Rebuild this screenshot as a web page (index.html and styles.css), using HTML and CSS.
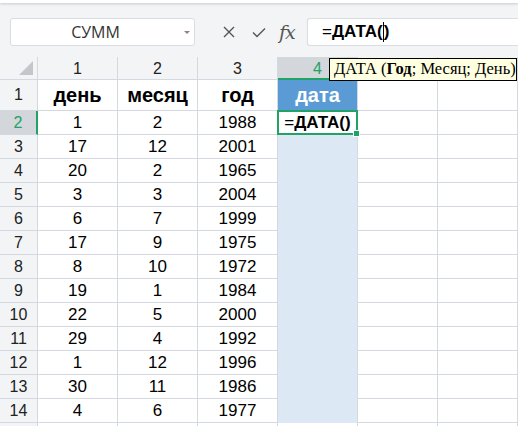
FILE: index.html
```html
<!DOCTYPE html>
<html>
<head>
<meta charset="utf-8">
<link rel="stylesheet" href="styles.css">
</head>
<body>
<div class="topstrip"></div>
<div class="toolbar">
  <div class="namebox"><span class="name">СУММ</span><span class="caret"></span></div>
  <div class="tools">
    <svg class="ico" width="16" height="16" viewBox="0 0 16 16"><path d="M3 3 L13 13 M13 3 L3 13" stroke="#555" stroke-width="1.4" fill="none"/></svg>
    <svg class="ico" width="16" height="16" viewBox="0 0 16 16"><path d="M2 8.5 L6 12.5 L14 4.5" stroke="#555" stroke-width="1.4" fill="none"/></svg>
    <span class="fx">fx</span>
  </div>
  <div class="formula"><span class="eq">=</span><b>ДАТА(</b><span class="cursor"></span><b>)</b></div>
</div>
<div class="sheet">
  <div class="grid">
    <div class="corner"><span class="tri"></span></div>
    <div class="ch">1</div><div class="ch">2</div><div class="ch">3</div><div class="ch chsel">4</div><div class="ch"></div><div class="ch"></div>

    <div class="rh r1">1</div><div class="c r1 hd">день</div><div class="c r1 hd">месяц</div><div class="c r1 hd">год</div><div class="c r1 hd blue">дата</div><div class="c r1"></div><div class="c r1"></div>

    <div class="rh rhsel">2</div><div class="c">1</div><div class="c">2</div><div class="c">1988</div><div class="c active"><span class="eq">=</span><b>ДАТА()</b></div><div class="c"></div><div class="c"></div>
    <div class="rh">3</div><div class="c">17</div><div class="c">12</div><div class="c">2001</div><div class="c sel"></div><div class="c"></div><div class="c"></div>
    <div class="rh">4</div><div class="c">20</div><div class="c">2</div><div class="c">1965</div><div class="c sel"></div><div class="c"></div><div class="c"></div>
    <div class="rh">5</div><div class="c">3</div><div class="c">3</div><div class="c">2004</div><div class="c sel"></div><div class="c"></div><div class="c"></div>
    <div class="rh">6</div><div class="c">6</div><div class="c">7</div><div class="c">1999</div><div class="c sel"></div><div class="c"></div><div class="c"></div>
    <div class="rh">7</div><div class="c">17</div><div class="c">9</div><div class="c">1975</div><div class="c sel"></div><div class="c"></div><div class="c"></div>
    <div class="rh">8</div><div class="c">8</div><div class="c">10</div><div class="c">1972</div><div class="c sel"></div><div class="c"></div><div class="c"></div>
    <div class="rh">9</div><div class="c">19</div><div class="c">1</div><div class="c">1984</div><div class="c sel"></div><div class="c"></div><div class="c"></div>
    <div class="rh">10</div><div class="c">22</div><div class="c">5</div><div class="c">2000</div><div class="c sel"></div><div class="c"></div><div class="c"></div>
    <div class="rh">11</div><div class="c">29</div><div class="c">4</div><div class="c">1992</div><div class="c sel"></div><div class="c"></div><div class="c"></div>
    <div class="rh">12</div><div class="c">1</div><div class="c">12</div><div class="c">1996</div><div class="c sel"></div><div class="c"></div><div class="c"></div>
    <div class="rh">13</div><div class="c">30</div><div class="c">11</div><div class="c">1986</div><div class="c sel"></div><div class="c"></div><div class="c"></div>
    <div class="rh">14</div><div class="c">4</div><div class="c">6</div><div class="c">1977</div><div class="c sel"></div><div class="c"></div><div class="c"></div>
    <div class="rh"></div><div class="c"></div><div class="c"></div><div class="c"></div><div class="c"></div><div class="c"></div><div class="c"></div>
  </div>
  <div class="tooltip">ДАТА (<b>Год</b>; Месяц; День)</div>
</div>
</body>
</html>
```
FILE: styles.css
```css
html, body {
  margin: 0;
  padding: 0;
  width: 518px;
  height: 426px;
  overflow: hidden;
  background: #ffffff;
  font-family: "Liberation Sans", Arial, sans-serif;
}
.topstrip {
  height: 3px;
  background: #ffffff;
  box-shadow: 0 1px 3px rgba(0,0,0,0.18);
  position: relative;
  z-index: 1;
}
.toolbar {
  height: 54px;
  background: #f3f4f6;
  display: flex;
  align-items: flex-start;
  padding-top: 15px;
  box-sizing: border-box;
}
.namebox {
  margin-left: 10px;
  width: 185px;
  height: 28px;
  box-sizing: border-box;
  background: #ffffff;
  border: 1px solid #d9dce1;
  border-radius: 3px;
  display: flex;
  align-items: center;
  position: relative;
}
.name {
  flex: 1;
  text-align: center;
  font-family: "Open Sans", "Liberation Sans", sans-serif;
  font-size: 16px;
  color: #333;
  padding-right: 14px;
}
.caret {
  position: absolute;
  right: 4px;
  top: 12px;
  width: 0;
  height: 0;
  border-left: 3px solid transparent;
  border-right: 3px solid transparent;
  border-top: 3px solid #888;
}
.tools {
  width: 112px;
  height: 28px;
  display: flex;
  align-items: center;
  padding-left: 26px;
  box-sizing: border-box;
  gap: 14px;
}
.ico { display: block; }
.fx {
  font-family: "DejaVu Serif", "Liberation Serif", serif;
  font-style: italic;
  font-size: 19px;
  color: #555;
  margin-left: -2px;
  letter-spacing: -1px;
}
.formula {
  flex: 1;
  height: 28px;
  box-sizing: border-box;
  background: #ffffff;
  border: 1px solid #d9dce1;
  border-right: none;
  border-radius: 3px 0 0 3px;
  display: flex;
  align-items: center;
  padding-left: 14px;
  font-size: 17px;
  color: #000;
}
.formula b { font-weight: bold; }
.cursor {
  display: inline-block;
  width: 1px;
  height: 20px;
  background: #000;
}
.sheet { position: relative; }
.grid {
  display: grid;
  grid-template-columns: 38px 80px 80px 80px 80px 80px 80px;
  grid-template-rows: 23px 31px repeat(14, 24px);
}
.grid > div {
  box-sizing: border-box;
  border-right: 1px solid #d4d8e0;
  border-bottom: 1px solid #d4d8e0;
  display: flex;
  align-items: center;
  justify-content: center;
  font-size: 17px;
  color: #000;
  white-space: nowrap;
}
.corner { background: #f3f4f6; position: relative; }
.tri {
  position: absolute;
  right: 4px;
  bottom: 4px;
  width: 0; height: 0;
  border-left: 14px solid transparent;
  border-bottom: 14px solid #c4c6ca;
}
.grid > .ch {
  background: #f3f4f6;
  color: #222;
  font-size: 16px;
  padding-top: 2px;
}
.grid > .chsel {
  background: #d3d6db;
  color: #21a366;
  border-bottom: 2px solid #21a366;
}
.grid > .rh {
  background: #f3f4f6;
  color: #222;
  font-size: 16px;
}
.grid > .rhsel {
  background: #d3d6db;
  color: #21a366;
  border-right: 2px solid #21a366;
}
.grid > .hd {
  font-weight: bold;
  font-size: 20px;
}
.grid > .blue {
  background: #5b9bd5;
  color: #ffffff;
  border-bottom-color: #5b9bd5;
}
.grid > .sel {
  background: #dce9f5;
  border-bottom-color: #dce9f5;
}
.grid > .active {
  position: relative;
  background: #ffffff;
}
.active::after {
  content: "";
  position: absolute;
  left: -1px; top: -1px; right: -1px; bottom: -1px;
  border: 2px solid #21a366;
}
.active::before {
  content: "";
  position: absolute;
  right: -3px;
  bottom: -3px;
  width: 5px;
  height: 5px;
  background: #21a366;
  border: 1px solid #fff;
  z-index: 2;
}
.active b { font-weight: bold; }
.tooltip {
  position: absolute;
  left: 329px;
  top: 1px;
  width: 188px;
  height: 23px;
  box-sizing: border-box;
  background: #ffffe1;
  border: 1px solid #000;
  font-family: "Liberation Serif", "Times New Roman", serif;
  font-size: 16.5px;
  color: #000;
  padding-left: 4px;
  line-height: 20px;
  white-space: nowrap;
  z-index: 3;
}
```
